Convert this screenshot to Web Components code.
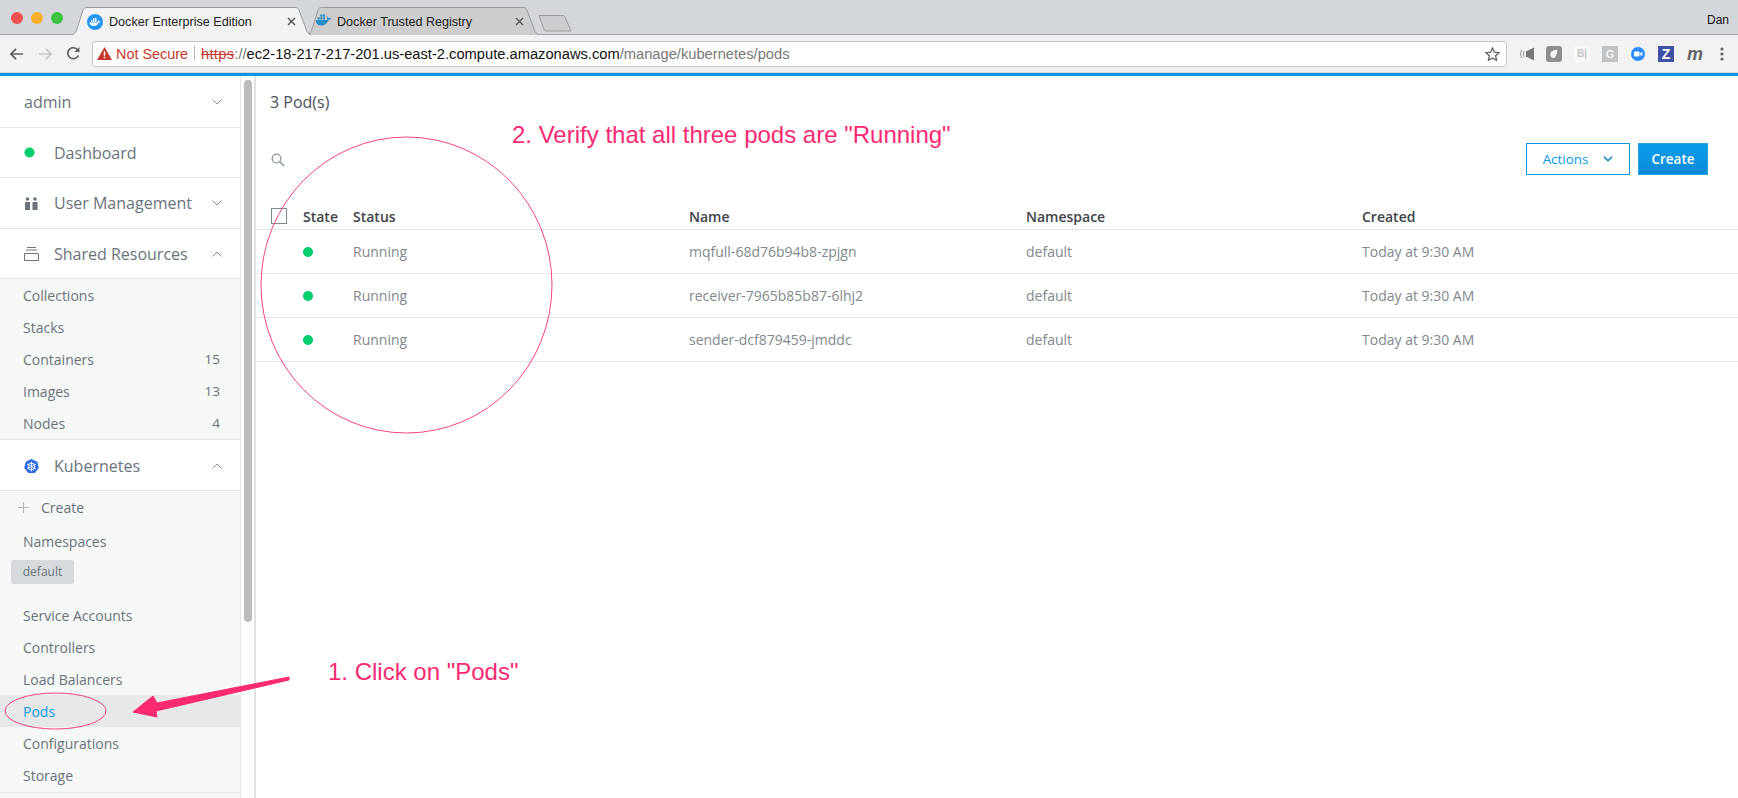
<!DOCTYPE html>
<html>
<head>
<meta charset="utf-8">
<title>Docker Enterprise Edition</title>
<style>
  html, body { margin: 0; height: 798px; overflow: hidden; background: #fff; }
  body { font-family: "Open Sans", sans-serif; position: relative; }
  .page { display: flex; height: 722px; }
</style>
</head>
<body>
<browser-chrome></browser-chrome>
<div class="page">
  <side-nav></side-nav>
  <pods-view></pods-view>
</div>
<note-layer></note-layer>

<script>
const whale = (c) => `<svg width="17" height="12" viewBox="0 0 15 11"><path d="M0.500 5.500h10c.6-1.400.5-2.600 0-3.600 1 .4 1.500 1.200 1.700 2 .8-.3 1.700-.2 2.300.2-.5 1-1.400 1.300-2.400 1.300C11 8.500 8.500 10.500 5 10.500 2 10.500.5 8.500.5 5.500z" fill="${c}"/><path d="M2 3h2v2H2zM4.500 3h2v2h-2zM7 3h2v2H7zM4.500.5h2v2h-2zM7 .5h2v2H7z" fill="${c}"/></svg>`;

class BrowserTab extends HTMLElement {
  constructor() {
    super();
    this.attachShadow({ mode: "open" });
  }

  connectedCallback() {
    const active = this.hasAttribute("active");
    const fill = active ? "#f2f2f2" : "#cdcdcd";
    const w = active ? 241 : 234;
    this.shadowRoot.innerHTML = `
      <style>
        :host { display: block; position: relative; width: ${w}px; height: 28px; margin-right: -6px; ${active ? "z-index: 1;" : ""} }
        svg.bg { position: absolute; left: 0; top: 0; }
        .inner { position: relative; display: flex; align-items: center; height: 29px; padding: 0 0 0 ${active ? 16 : 9}px; font: 12.600px "Liberation Sans", Arial, sans-serif; color: #222; }
        .ico { width: 16px; height: 16px; display: flex; align-items: center; justify-content: center; margin-right: 6px; flex: none; }
        .label { flex: 1; white-space: nowrap; }
        .close { width: 9px; height: 9px; margin-right: 16px; flex: none; }
      </style>
      <svg class="bg" width="${w}" height="28"><path d="M0.500 28 C4 27 5 25 6 22 L12 3 C13 1 14 .5 16 .5 H${w - 17} C${w - 15} .5 ${w - 14} 1 ${w - 13} 3 L${w - 6} 22 C${w - 5} 25 ${w - 4} 27 ${w - .5} 28" fill="${fill}" stroke="#9a9a9a"/></svg>
      <div class="inner">
        <span class="ico"><slot name="icon"></slot></span>
        <span class="label"><slot></slot></span>
        <svg class="close" viewBox="0 0 9 9"><path d="M1 1l7 7M8 1L1 8" stroke="#555" stroke-width="1.400"/></svg>
      </div>`;
  }
}
customElements.define("browser-tab", BrowserTab);

class BrowserChrome extends HTMLElement {
  constructor() {
    super();
    this.attachShadow({ mode: "open" });
  }

  connectedCallback() {
    this.shadowRoot.innerHTML = `
      <style>
        :host { display: block; font-family: "Liberation Sans", Arial, sans-serif; }
        .tabs { height: 35px; box-sizing: border-box; background: #d3d6da; border-bottom: 1px solid #a4a4a4; display: flex; padding-top: 7px; position: relative; }
        .lights { display: flex; gap: 8px; padding: 5px 0 0 11px; width: 60px; height: 12px; flex: none; }
        .lights i { width: 12px; height: 12px; border-radius: 50%; }
        .tabstrip { display: flex; margin-bottom: -1px; }
        .newtab { margin: 8px 0 0 4px; }
        .user { margin: 6px 9px 0 auto; font-size: 12px; color: #111; }
        .bar { height: 38px; background: #f2f2f2; display: flex; align-items: center; border-bottom: 1px solid #d8d8d8; box-sizing: border-box; }
        .nav { display: flex; align-items: center; width: 92px; flex: none; }
        .nav svg { display: block; }
        .url { width: 1415px; height: 26px; box-sizing: border-box; background: #fff; border: 1px solid #c4c4c4; border-radius: 3px; display: flex; align-items: center; font-size: 14.700px; padding-left: 4px; white-space: nowrap; }
        .warn { color: #c5372c; display: flex; align-items: center; gap: 4px; margin-right: 6px; font-size: 14.400px; }
        .sep { width: 1px; height: 15px; background: #bbb; margin-right: 6px; }
        .proto { color: #c5372c; text-decoration: line-through; letter-spacing: .3px; }
        .dim { color: #777; }
        .host { color: #111; }
        .star { margin-left: auto; margin-right: 6px; }
        .ext { display: flex; align-items: center; flex: 1; padding-left: 11px; }
        .ext > * { flex: none; }
        .blue { height: 3px; background: #0a98e6; }
      </style>
      <div class="tabs">
        <div class="lights">
          <i style="background:#f0524f"></i><i style="background:#f6b02c"></i><i style="background:#3dc340"></i>
        </div>
        <div class="tabstrip">
          <browser-tab active><svg slot="icon" width="16" height="16" viewBox="0 0 16 16"><circle cx="8" cy="8" r="8" fill="#2496ed"/><path d="M2.500 8.500h8c.5-1 .5-1.800.2-2.500.7.300 1.100.800 1.200 1.400.6-.2 1.200-.1 1.600.2-.4.700-1 .9-1.700.9-.7 2.200-2.500 3.600-5 3.600-2.600 0-4.300-1.400-4.300-3.600z" fill="#fff"/><path d="M4 6.300h1.500v1.600H4zM6 6.300h1.500v1.600H6zM8 6.300h1.500v1.600H8zM6 4.300h1.500v1.600H6zM8 4.300h1.500v1.600H8z" fill="#fff"/></svg>Docker Enterprise Edition</browser-tab>
          <browser-tab><span slot="icon">${whale("#2a8fc4")}</span>Docker Trusted Registry</browser-tab>
        </div>
        <svg class="newtab" width="34" height="17" viewBox="0 0 34 17"><path d="M1 .5 H25 C26 .5 26.500 1 27 2 L33 16 H8 C7 16 6.500 15.500 6 14.500z" fill="#cbcdd0" stroke="#9a9a9a"/></svg>
        <span class="user">Dan</span>
      </div>
      <div class="bar">
        <div class="nav">
          <svg style="margin-left:9px" width="15" height="14" viewBox="0 0 16 14"><path d="M15 7H2M7.500 1.500L2 7l5.500 5.500" fill="none" stroke="#5f5f5f" stroke-width="1.800"/></svg>
          <svg style="margin-left:14px" width="15" height="14" viewBox="0 0 16 14"><path d="M1 7h13M8.500 1.500L14 7l-5.500 5.500" fill="none" stroke="#c6c6c6" stroke-width="1.800"/></svg>
          <svg style="margin-left:13px" width="15" height="15" viewBox="0 0 15 15"><path d="M12.300 9.500A5.500 5.500 0 1 1 12 4.300" fill="none" stroke="#5f5f5f" stroke-width="1.700"/><path d="M13.500 1v5h-5z" fill="#5f5f5f"/></svg>
        </div>
        <div class="url">
          <span class="warn"><svg width="15" height="13" viewBox="0 0 14 12"><path d="M7 0l7 12H0z" fill="#c5372c"/><path d="M6.300 4h1.400v4.200H6.300zM6.300 9h1.400v1.400H6.300z" fill="#fff"/></svg>Not Secure</span>
          <span class="sep"></span>
          <span class="proto">https</span><span class="dim">://</span><span class="host">ec2-18-217-217-201.us-east-2.compute.amazonaws.com</span><span class="dim">/manage/kubernetes/pods</span>
          <svg class="star" width="15" height="14" viewBox="0 0 15 14"><path d="M7.500 1l1.900 4.200 4.600.5-3.400 3.100 1 4.500-4.100-2.300-4.100 2.300 1-4.500L1 5.700l4.600-.5z" fill="none" stroke="#5f5f5f" stroke-width="1.300"/></svg>
        </div>
        <div class="ext">
          <svg width="17" height="14" viewBox="0 0 17 14"><path d="M8 4.500l8-4v13l-8-4z" fill="#777"/><rect x="8" y="4" width="5" height="6" fill="#777"/><path d="M6 4q-1.500 3 0 6M3.500 3q-2 4 0 8" fill="none" stroke="#999"/></svg>
          <svg style="margin-left:11px" width="16" height="16" viewBox="0 0 16 16"><rect width="16" height="16" rx="3" fill="#8d8d8d"/><path d="M4.500 7q1-3 7-3.500-.5 7-3.500 8.500Q3.500 12 4.500 7z" fill="#f4f4f4"/></svg>
          <span style="margin-left:12px;width:16px;height:16px;background:#f8f8f8;color:#c4c4c4;font:bold 10px 'Liberation Sans';display:flex;align-items:center;justify-content:center">B|</span>
          <span style="margin-left:12px;width:16px;height:16px;background:#c2c2c2;color:#f4f4f4;font:bold 11px 'Liberation Sans';display:flex;align-items:center;justify-content:center">G</span>
          <svg style="margin-left:13px" width="14" height="14" viewBox="0 0 14 14"><circle cx="7" cy="7" r="7" fill="#2d8cff"/><rect x="3" y="4.500" width="5.500" height="5" rx="1" fill="#fff"/><path d="M9 6.500l2.300-1.700v4.400L9 7.500z" fill="#fff"/></svg>
          <span style="margin-left:13px;width:16px;height:16px;background:#3f51a3;color:#fff;font:bold 14px 'Liberation Sans';display:flex;align-items:center;justify-content:center">Z</span>
          <span style="margin-left:13px;color:#666;font:italic bold 18px 'Liberation Sans';width:16px;text-align:center;line-height:16px">m</span>
          <svg style="margin-left:17px" width="4" height="14" viewBox="0 0 4 14"><circle cx="2" cy="2" r="1.600" fill="#666"/><circle cx="2" cy="7" r="1.600" fill="#666"/><circle cx="2" cy="12" r="1.600" fill="#666"/></svg>
        </div>
      </div>
      <div class="blue"></div>`;
  }
}
customElements.define("browser-chrome", BrowserChrome);

const chevron = (up) => `<svg width="10" height="6" viewBox="0 0 10 6"><path d="${up ? "M.5 5.500L5 1l4.500 4.500" : "M.5 .5L5 5l4.500-4.500"}" fill="none" stroke="#8b9298" stroke-width="1"/></svg>`;

class NavHead extends HTMLElement {
  constructor() {
    super();
    this.attachShadow({ mode: "open" });
  }

  connectedCallback() {
    const chev = this.getAttribute("chevron");
    this.shadowRoot.innerHTML = `
      <style>
        :host { display: flex; align-items: center; box-sizing: border-box; height: var(--h, 51px); border-bottom: 1px solid #e3e5e6; background: #fff; padding: 0 18px 0 24px; font-size: 16px; color: #69737b; }
        .icon { width: 30px; display: flex; flex: none; }
        .text { flex: 1; }
        .chev { display: flex; }
      </style>
      <span class="icon" part="icon"><slot name="icon"></slot></span>
      <span class="text"><slot></slot></span>
      <span class="chev">${chev ? chevron(chev === "up") : ""}</span>`;
  }
}
customElements.define("nav-head", NavHead);

class NavLink extends HTMLElement {
  constructor() {
    super();
    this.attachShadow({ mode: "open" });
  }

  connectedCallback() {
    const on = this.hasAttribute("selected");
    this.shadowRoot.innerHTML = `
      <style>
        :host { display: flex; align-items: center; height: 32px; padding: 0 20px 0 23px; font-size: 14px; background: ${on ? "#e6e8e9" : "transparent"}; color: ${on ? "#0b98e6" : "#69737b"}; }
        .label { flex: 1; }
        .count { font-size: 13.500px; }
      </style>
      <span class="label"><slot></slot></span><span class="count">${this.getAttribute("count") || ""}</span>`;
  }
}
customElements.define("nav-link", NavLink);

class SideNav extends HTMLElement {
  constructor() {
    super();
    this.attachShadow({ mode: "open" });
  }

  connectedCallback() {
    this.shadowRoot.innerHTML = `
      <style>
        :host { display: flex; flex: none; width: 256px; box-sizing: border-box; border-right: 2px solid #e2e2e2; height: 722px; overflow: hidden; }
        .col { width: 240px; flex: none; background: #f6f7f7; border-right: 1px solid #e3e5e6; }
        .track { flex: 1; background: #fff; padding-top: 4px; }
        .thumb { width: 8px; height: 542px; margin-left: 3px; border-radius: 4px; background: #bcbcbc; }
        .create { display: flex; align-items: center; height: 33px; padding-left: 18px; font-size: 14px; color: #69737b; gap: 12px; }
        .chipwrap { padding: 1px 0 15px 11px; }
        .chip { display: inline-block; width: 63px; height: 24px; line-height: 23px; border-radius: 3px; background: #d7dadc; text-align: center; font-size: 12px; color: #69737b; }
        .last { height: 1px; background: #e3e5e6; margin-top: 1px; }
      </style>
      <div class="col">
        <nav-head chevron="down" style="--h:52px"><span style="margin-left:-30px">admin</span></nav-head>
        <nav-head style="--h:50px"><svg slot="icon" width="11" height="11" viewBox="0 0 11 11"><circle cx="5.500" cy="5.500" r="5" fill="#00cf6e"/></svg>Dashboard</nav-head>
        <nav-head chevron="down"><svg slot="icon" width="15" height="13" viewBox="0 0 15 13"><circle cx="3.500" cy="2" r="1.800" fill="#6b747b"/><circle cx="11" cy="2" r="1.800" fill="#6b747b"/><path d="M1 5h5v8H1zM8.500 5h5v8h-5z" fill="#6b747b"/></svg>User Management</nav-head>
        <nav-head chevron="up" style="--h:50px"><svg slot="icon" width="15" height="14" viewBox="0 0 15 14"><path d="M3 .5h9M2 3h11M.5 6.500h14v7H.5z" fill="none" stroke="#6b747b"/></svg>Shared Resources</nav-head>
        <div>
          <nav-link>Collections</nav-link>
          <nav-link>Stacks</nav-link>
          <nav-link count="15">Containers</nav-link>
          <nav-link count="13">Images</nav-link>
          <nav-link count="4">Nodes</nav-link>
        </div>
        <nav-head chevron="up" style="border-top:1px solid #e3e5e6;--h:52px;padding-top:2px"><svg slot="icon" width="15" height="15" viewBox="0 0 15 15"><path d="M7.500 0l5.800 2.800 1.500 6.300-4 5H4.200l-4-5 1.500-6.300z" fill="#326de6"/><circle cx="7.500" cy="7.500" r="3.300" fill="none" stroke="#fff" stroke-width="1"/><path d="M7.500 2.500v10M3 5l9 5M12 5l-9 5" stroke="#fff" stroke-width=".8"/></svg>Kubernetes</nav-head>
        <div>
          <div class="create"><svg width="11" height="11" viewBox="0 0 11 11"><path d="M5.500 0v11M0 5.500h11" stroke="#b9bdc0" stroke-width="1.200"/></svg>Create</div>
          <nav-link style="height:34px">Namespaces</nav-link>
          <div class="chipwrap"><span class="chip">default</span></div>
          <nav-link>Service Accounts</nav-link>
          <nav-link>Controllers</nav-link>
          <nav-link>Load Balancers</nav-link>
          <nav-link selected>Pods</nav-link>
          <nav-link>Configurations</nav-link>
          <nav-link>Storage</nav-link>
          <div class="last"></div>
        </div>
      </div>
      <div class="track"><div class="thumb"></div></div>`;
  }
}
customElements.define("side-nav", SideNav);

class PodRow extends HTMLElement {
  constructor() {
    super();
    this.attachShadow({ mode: "open" });
  }

  connectedCallback() {
    this.shadowRoot.innerHTML = `
      <style>
        :host { display: grid; grid-template-columns: 47px 50px 336px 337px 336px 1fr; align-items: center; height: 44px; box-sizing: border-box; border-bottom: 1px solid #e3e5e6; font-size: 14px; color: #82888d; }
        .dot { width: 10px; height: 10px; border-radius: 50%; background: #00cf6e; }
      </style>
      <span></span><span class="dot"></span>
      <span>Running</span>
      <span>${this.getAttribute("pod")}</span>
      <span>default</span>
      <span>Today at 9:30 AM</span>`;
  }
}
customElements.define("pod-row", PodRow);

class PodsView extends HTMLElement {
  constructor() {
    super();
    this.attachShadow({ mode: "open" });
  }

  connectedCallback() {
    this.shadowRoot.innerHTML = `
      <style>
        :host { display: block; flex: 1; min-width: 0; }
        .count { height: 52px; padding: 16px 0 0 14px; box-sizing: border-box; font-size: 16px; color: #4a5157; line-height: 20px; }
        .tools { display: flex; align-items: center; height: 47px; padding: 15px 30px 0 15px; box-sizing: border-box; }
        .tools svg.search { margin-top: 2px; }
        .btns { margin-left: auto; display: flex; gap: 8px; }
        button { font: 600 13.500px "Open Sans", sans-serif; height: 32px; box-sizing: border-box; border-radius: 0; padding: 0; }
        .actions { width: 104px; background: #fff; border: 1px solid #0b98e6; color: #0b98e6; display: flex; align-items: center; justify-content: center; gap: 15px; font-weight: 400; font-size: 13.400px; }
        .create { width: 70px; background: linear-gradient(#0b9dec, #0a8bd8); border: 1px solid #2ea3e4; color: #fff; }
        .head { display: grid; grid-template-columns: 47px 50px 336px 337px 336px 1fr; align-items: center; height: 49px; padding-top: 22px; box-sizing: border-box; margin-top: 6px; border-bottom: 1px solid #e3e5e6; font-size: 14px; font-weight: 600; color: #3d4449; }
        .box { width: 14px; height: 14px; border: 1px solid #7e8890; margin-left: 15px; }
      </style>
      <div class="count">3 Pod(s)</div>
      <div class="tools">
        <svg class="search" width="14" height="14" viewBox="0 0 14 14"><circle cx="5.500" cy="5.500" r="4.300" fill="none" stroke="#8b98a3" stroke-width="1.300"/><path d="M8.800 8.800L13 13" stroke="#8b98a3" stroke-width="1.600"/></svg>
        <div class="btns">
          <button class="actions">Actions <svg width="10" height="6" viewBox="0 0 10 6"><path d="M1 .8l4 4 4-4" fill="none" stroke="#0a7fc0" stroke-width="1.500"/></svg></button>
          <button class="create">Create</button>
        </div>
      </div>
      <div class="head"><span class="box"></span><span>State</span><span>Status</span><span>Name</span><span>Namespace</span><span>Created</span></div>
      <pod-row pod="mqfull-68d76b94b8-zpjgn"></pod-row>
      <pod-row pod="receiver-7965b85b87-6lhj2"></pod-row>
      <pod-row pod="sender-dcf879459-jmddc"></pod-row>`;
  }
}
customElements.define("pods-view", PodsView);

class NoteLayer extends HTMLElement {
  constructor() {
    super();
    this.attachShadow({ mode: "open" });
  }

  connectedCallback() {
    this.shadowRoot.innerHTML = `
      <style>
        :host { position: absolute; inset: 0; display: block; pointer-events: none; }
        svg { position: absolute; left: 0; top: 0; }
        .note { position: absolute; font: 24px "Liberation Sans", Arial, sans-serif; color: #fd2a72; white-space: nowrap; line-height: 26px; }
      </style>
      <svg width="1738" height="798">
        <ellipse cx="406.500" cy="285" rx="145.500" ry="148" fill="none" stroke="#f5447e" stroke-width="1"/>
        <ellipse cx="55.500" cy="711" rx="50.500" ry="18" fill="none" stroke="#f5447e" stroke-width="1"/>
        <path d="M289 677 L157 703 L153 696 L133 712 L157 717 L156 711 L289 680z" fill="#fd2a72" stroke="#fd2a72" stroke-width="1" stroke-linejoin="round"/>
      </svg>
      <span class="note" style="left:512px;top:122px">2. Verify that all three pods are "Running"</span>
      <span class="note" style="left:328px;top:659px">1. Click on "Pods"</span>`;
  }
}
customElements.define("note-layer", NoteLayer);
</script>
</body>
</html>
